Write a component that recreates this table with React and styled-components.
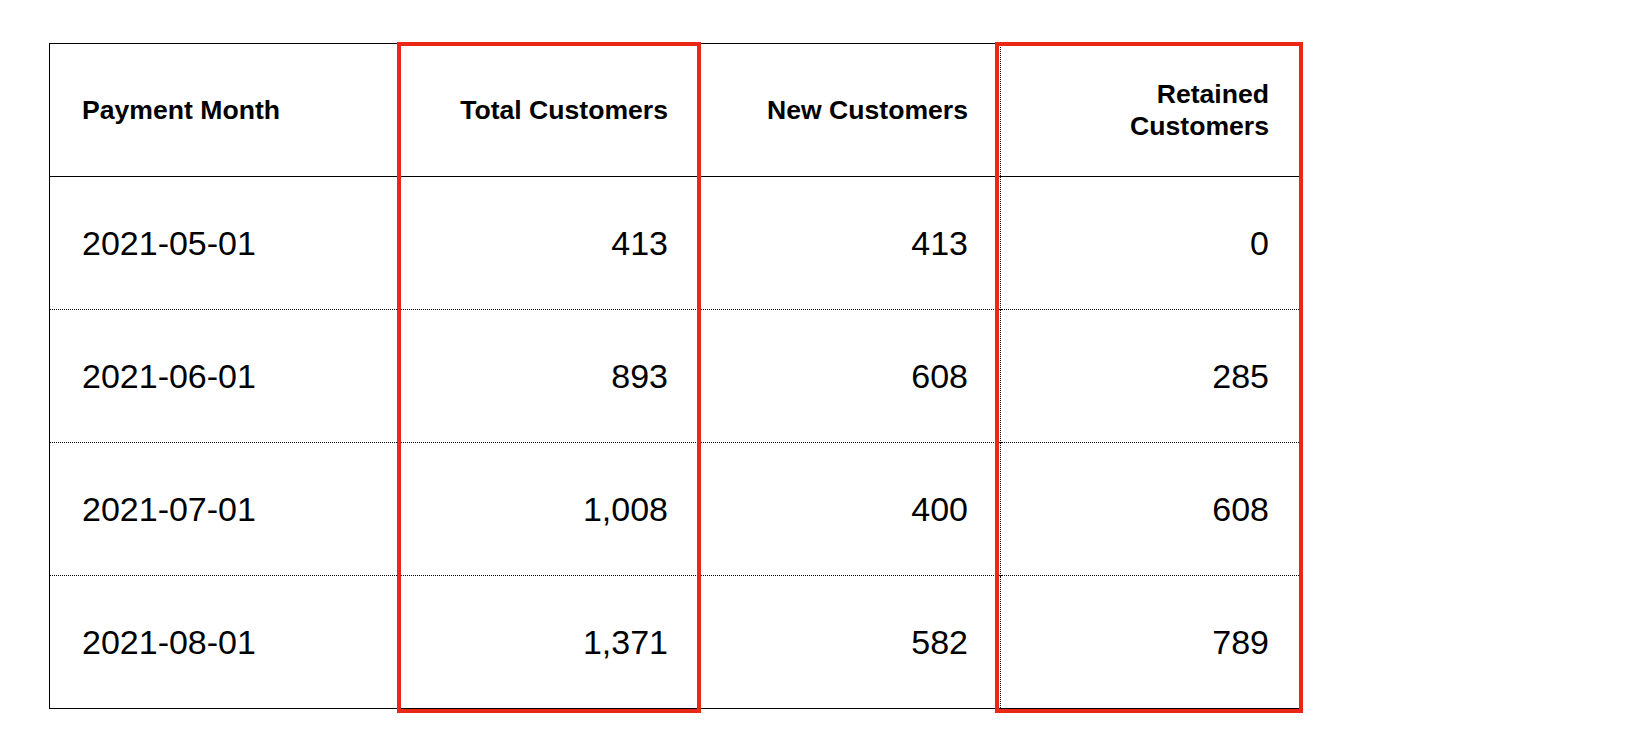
import React from "react";
import styled, { createGlobalStyle } from "styled-components";

const GlobalStyle = createGlobalStyle`
  html, body {
    margin: 0;
    padding: 0;
    background: #ffffff;
  }
  body {
    font-family: "Liberation Sans", Arial, Helvetica, sans-serif;
    color: #000;
  }
`;

const Page = styled.div`
  min-height: 752px;
  box-sizing: border-box;
  padding: 43px 0 40px 49px;
`;

const TableWrap = styled.div`
  position: relative;
  width: 1252px;
`;

const Table = styled.table`
  border-collapse: collapse;
  table-layout: fixed;
  width: 1252px;
  border: 1px solid #000;
`;

const HeadCell = styled.th`
  height: 132px;
  padding: 0 32px;
  font-size: 26.6px;
  line-height: 32px;
  font-weight: 700;
  text-align: ${(p) => (p.left ? "left" : "right")};
  vertical-align: middle;
  border-bottom: 1px solid #000;
  border-left: 1px dotted #000;
  &:first-child {
    border-left: 1px solid #000;
  }
`;

const Cell = styled.td`
  height: 132px;
  padding: 0 32px;
  font-size: 34px;
  font-weight: 400;
  text-align: ${(p) => (p.left ? "left" : "right")};
  vertical-align: middle;
  border-left: 1px dotted #000;
  border-top: 1px dotted #000;
  &:first-child {
    border-left: 1px solid #000;
  }
`;

const BodyRow = styled.tr`
  &:first-child td {
    border-top: 1px solid #000;
  }
`;

// red annotation boxes drawn over the table
const Highlight = styled.div`
  position: absolute;
  top: -1px;
  bottom: -4px;
  box-sizing: border-box;
  border: 4px solid #ea2815;
  pointer-events: none;
  z-index: 2;
`;

const columns = [
  { key: "month", label: "Payment Month", width: 348, left: true },
  { key: "total", label: "Total Customers", width: 303 },
  { key: "fresh", label: "New Customers", width: 300 },
  { key: "retained", label: "Retained Customers", width: 301 },
];

const rows = [
  { month: "2021-05-01", total: "413", fresh: "413", retained: "0" },
  { month: "2021-06-01", total: "893", fresh: "608", retained: "285" },
  { month: "2021-07-01", total: "1,008", fresh: "400", retained: "608" },
  { month: "2021-08-01", total: "1,371", fresh: "582", retained: "789" },
];

const highlights = [
  { left: 348, width: 304 },
  { left: 946, width: 308 },
];

export default function App() {
  return (
    <Page>
      <GlobalStyle />
      <TableWrap>
        <Table>
          <colgroup>
            {columns.map((c) => (
              <col key={c.key} style={{ width: c.width }} />
            ))}
          </colgroup>
          <thead>
            <tr>
              {columns.map((c) => (
                <HeadCell key={c.key} left={c.left}>
                  {c.label}
                </HeadCell>
              ))}
            </tr>
          </thead>
          <tbody>
            {rows.map((r) => (
              <BodyRow key={r.month}>
                {columns.map((c) => (
                  <Cell key={c.key} left={c.left}>
                    {r[c.key]}
                  </Cell>
                ))}
              </BodyRow>
            ))}
          </tbody>
        </Table>
        {highlights.map((h, i) => (
          <Highlight key={i} style={{ left: h.left, width: h.width }} />
        ))}
      </TableWrap>
    </Page>
  );
}
